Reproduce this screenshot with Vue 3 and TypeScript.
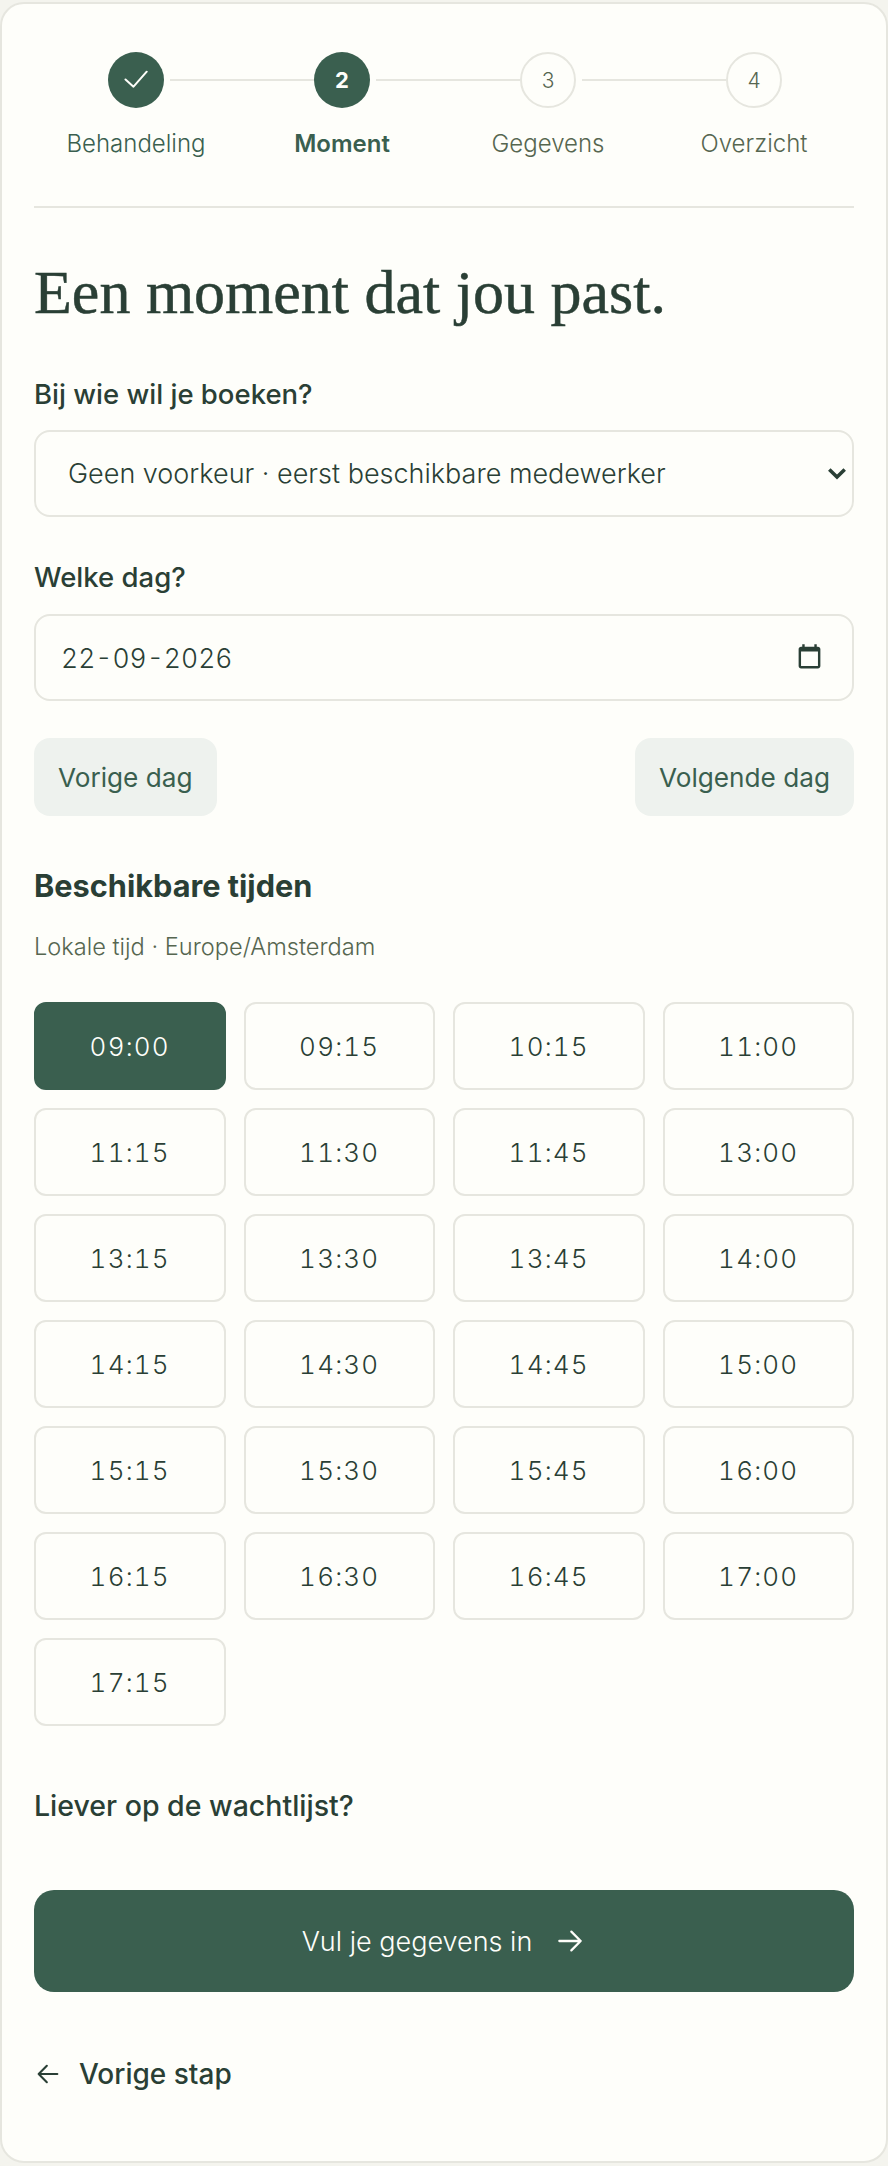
<script setup lang="ts">
const steps = [
  { label: 'Behandeling', state: 'done' },
  { label: 'Moment', state: 'active', num: '2' },
  { label: 'Gegevens', state: 'todo', num: '3' },
  { label: 'Overzicht', state: 'todo', num: '4' },
]
const slots = ['09:00','09:15','10:15','11:00','11:15','11:30','11:45','13:00','13:15','13:30','13:45','14:00','14:15','14:30','14:45','15:00','15:15','15:30','15:45','16:00','16:15','16:30','16:45','17:00','17:15']
</script>

<template>
  <div class="page">
    <main class="card">
      <ol class="steps">
        <li v-for="(s, i) in steps" :key="s.label" class="step" :class="s.state">
          <span v-if="i < steps.length - 1" class="connector"></span>
          <span class="dot">
            <svg v-if="s.state === 'done'" width="24" height="24" viewBox="0 0 24 24" fill="none" stroke="currentColor" stroke-width="2" stroke-linecap="round" stroke-linejoin="round"><path d="M1.5 11.5 9.5 18.7 22.7 3.7"/></svg>
            <template v-else>{{ s.num }}</template>
          </span>
          <span class="step-label">{{ s.label }}</span>
        </li>
      </ol>

      <h1 class="title">Een moment dat jou past.</h1>

      <label class="field-label first">Bij wie wil je boeken?</label>
      <div class="select-wrap">
        <select class="select">
          <option>Geen voorkeur · eerst beschikbare medewerker</option>
        </select>
        <svg class="chev" width="18" height="13" viewBox="0 0 18 13" fill="none" stroke="#2a3f35" stroke-width="3.6"><path d="M1.3 2.5 9 10l7.7-7.5"/></svg>
      </div>

      <label class="field-label second">Welke dag?</label>
      <div class="date">
        <span>22-09-2026</span>
        <svg class="cal" viewBox="0 0 24 24" width="29" height="29"><path fill="#2a3f35" d="M19 3h-1V1h-2v2H8V1H6v2H5c-1.11 0-2 .9-2 2v14c0 1.1.89 2 2 2h14c1.1 0 2-.9 2-2V5c0-1.1-.9-2-2-2zm0 16H5V7h14v12z"/></svg>
      </div>

      <div class="day-nav">
        <button class="ghost">Vorige dag</button>
        <button class="ghost">Volgende dag</button>
      </div>

      <h2 class="section">Beschikbare tijden</h2>
      <p class="tz">Lokale tijd · Europe/Amsterdam</p>

      <div class="slots">
        <button v-for="(t, i) in slots" :key="t" class="slot" :class="{ selected: i === 0 }">{{ t }}</button>
      </div>

      <p class="wait">Liever op de wachtlijst?</p>

      <button class="primary">
        <span>Vul je gegevens in</span>
        <svg width="32" height="32" viewBox="0 0 24 24" fill="none" stroke="currentColor" stroke-width="1.7" stroke-linecap="round" stroke-linejoin="round"><path d="M4 12h16M13 5l7 7-7 7"/></svg>
      </button>

      <a class="back">
        <svg width="28" height="28" viewBox="0 0 24 24" fill="none" stroke="currentColor" stroke-width="1.8" stroke-linecap="round" stroke-linejoin="round"><path d="M20 12H4M11 5l-7 7 7 7"/></svg>
        <span>Vorige stap</span>
      </a>
    </main>
  </div>
</template>

<style>
html, body { margin: 0; background: #f4f4ee; }
</style>

<style scoped>
.page { width: 888px; height: 2166px; padding: 2px 0 3px; box-sizing: border-box; font-family: "Inter", "Liberation Sans", sans-serif; color: #2a3f35; }
.card { box-sizing: border-box; width: 888px; height: 2161px; background: #fefefa; border: 2px solid #e6e6df; border-radius: 24px; padding: 48px 32px 0; }
.steps { list-style: none; margin: 0 -1px; padding: 0 0 48px; display: grid; grid-template-columns: repeat(4, 206px); position: relative; }
.steps::after { content: ""; position: absolute; left: 1px; right: 1px; bottom: 0; height: 2px; background: #e6e6df; }
.step { position: relative; display: flex; flex-direction: column; align-items: center; gap: 20px; }
.connector { position: absolute; left: 137px; width: 144px; top: 27px; height: 2px; background: #e6e6df; }
.dot { box-sizing: border-box; width: 56px; height: 56px; border-radius: 50%; display: flex; align-items: center; justify-content: center; font-size: 22px; }
.done .dot, .active .dot { background: #3a5f4f; color: #fefefa; }
.active .dot { font-weight: 700; }
.todo .dot { border: 2px solid #e6e6df; color: #566650; font-size: 21px; font-weight: 300; }
.step-label { font-size: 24px; line-height: 32px; color: #3a5f4f; font-weight: 300; }
.active .step-label { font-weight: 600; }
.todo .step-label { color: #566650; }
.title { font-family: "Liberation Serif", serif; font-weight: 400; font-size: 62px; line-height: 76px; margin: 46px 0 0; color: #2a3f35; -webkit-text-stroke: 0.5px #2a3f35; }
.field-label { display: block; font-size: 27.5px; line-height: 36px; font-weight: 500; }
.first { margin-top: 46px; }
.second { margin-top: 42px; }
.select-wrap { position: relative; margin-top: 18px; }
.chev { position: absolute; right: 8px; top: 37px; }
.select { appearance: none; display: block; width: 100%; height: 87px; box-sizing: border-box; background: #fefefa; border: 2px solid #e6e6df; border-radius: 16px; font: inherit; font-size: 27px; font-weight: 300; color: #2a3f35; padding: 0 14px 0 32px; }
.date { box-sizing: border-box; height: 87px; margin-top: 19px; border: 2px solid #e6e6df; border-radius: 16px; display: flex; align-items: center; justify-content: space-between; padding: 0 28px 0 25px; font-size: 26.5px; font-weight: 300; letter-spacing: 0; font-variant-numeric: tabular-nums; }
.cal { display: block; }
.day-nav { display: flex; justify-content: space-between; margin-top: 37px; }
.ghost { height: 78px; border: 0; background: #eef2ee; color: #3a5f4f; border-radius: 16px; font: inherit; font-size: 26.2px; font-weight: 400; padding: 0 24px; }
.section { font-size: 30.7px; line-height: 40px; font-weight: 700; margin: 50px 0 0; }
.tz { font-size: 23.6px; line-height: 32px; color: #566650; margin: 25px 0 0; font-weight: 300; }
.slots { display: grid; grid-template-columns: repeat(4, 1fr); gap: 18px; margin-top: 39px; }
.slot { box-sizing: border-box; height: 88px; padding-top: 2px; background: #fefefa; border: 2px solid #e6e6df; border-radius: 12px; font: inherit; font-size: 26px; font-weight: 300; letter-spacing: 1.2px; font-variant-numeric: tabular-nums; color: #2a3f35; }
.slot.selected { background: #3a5f4f; border-color: #3a5f4f; color: #fefefa; }
.wait { font-size: 28.5px; line-height: 36px; font-weight: 500; margin: 62px 0 0; }
.primary { margin-top: 66px; width: 100%; height: 102px; border: 0; border-radius: 20px; background: #3a5f4f; color: #fefefa; font: inherit; font-size: 27px; font-weight: 300; display: flex; align-items: center; justify-content: center; gap: 22px; }
.back { display: flex; align-items: center; gap: 17px; margin-top: 65px; font-size: 28px; font-weight: 500; }
</style>
